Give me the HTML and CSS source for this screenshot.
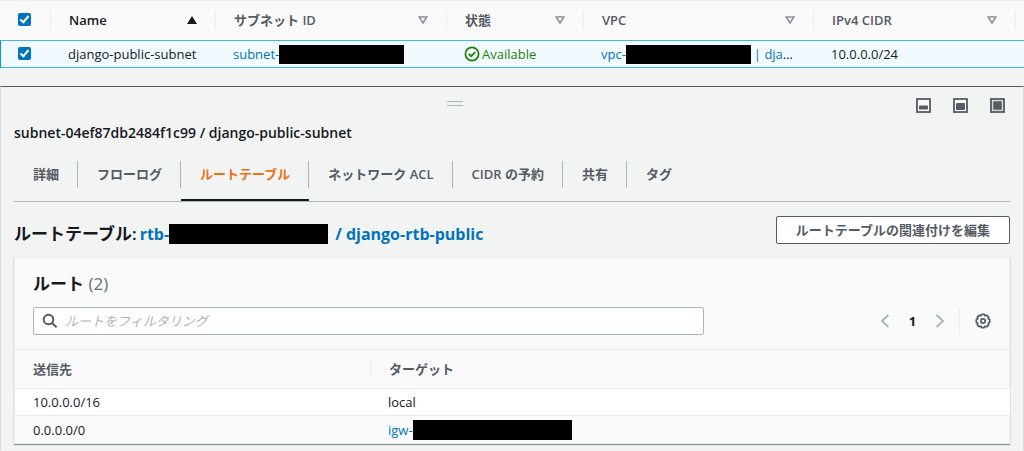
FILE: index.html
```html
<!DOCTYPE html>
<html lang="ja">
<head>
<meta charset="utf-8">
<title>サブネット</title>
<link rel="stylesheet" href="styles.css">
</head>
<body>
<table class="subnets">
  <colgroup><col class="c-check"><col class="c-name"><col class="c-id"><col class="c-state"><col class="c-vpc"><col class="c-cidr"></colgroup>
  <thead>
    <tr>
      <th class="check-cell"><input type="checkbox" class="check" aria-label="すべて選択" checked></th>
      <th><div class="head dark"><span>Name</span><svg class="sort" width="12" height="10" viewBox="0 0 12 10"><path d="M6 1 L11 9 H1 Z" fill="#16191f"/></svg></div></th>
      <th><div class="head"><span>サブネット ID</span><svg class="sort" width="12" height="10" viewBox="0 0 12 10"><path d="M2.3 2 H9.7 L6 8 Z" fill="none" stroke="#879596" stroke-width="1.6"/></svg></div></th>
      <th><div class="head"><span>状態</span><svg class="sort" width="12" height="10" viewBox="0 0 12 10"><path d="M2.3 2 H9.7 L6 8 Z" fill="none" stroke="#879596" stroke-width="1.6"/></svg></div></th>
      <th><div class="head"><span>VPC</span><svg class="sort" width="12" height="10" viewBox="0 0 12 10"><path d="M2.3 2 H9.7 L6 8 Z" fill="none" stroke="#879596" stroke-width="1.6"/></svg></div></th>
      <th><div class="head last"><span>IPv4 CIDR</span><svg class="sort" width="12" height="10" viewBox="0 0 12 10"><path d="M2.3 2 H9.7 L6 8 Z" fill="none" stroke="#879596" stroke-width="1.6"/></svg></div></th>
    </tr>
  </thead>
  <tbody>
    <tr class="selected">
      <td class="check-cell"><input type="checkbox" class="check" aria-label="django-public-subnet" checked></td>
      <td><div class="cell">django-public-subnet</div></td>
      <td><div class="cell"><a href="#">subnet-</a><span class="mask"></span></div></td>
      <td><div class="cell ok"><svg width="16" height="16" viewBox="0 0 16 16" fill="none" stroke="#1d8102" stroke-width="1.7"><circle cx="8" cy="8" r="6.6"/><path d="M4.7 7.8 L7.2 10.2 L11.3 6"/></svg><span>Available</span></div></td>
      <td><div class="cell"><a href="#">vpc-</a><span class="mask"></span><a href="#" class="after">| dja</a>…</div></td>
      <td><div class="cell">10.0.0.0/24</div></td>
    </tr>
  </tbody>
</table>

<section class="panel">
  <div class="panel-bar">
    <span class="grip"></span>
    <div class="sizes">
      <button type="button" aria-label="小"><svg width="15" height="15" viewBox="0 0 15 15"><rect x="1" y="1" width="13" height="13" fill="#fafafa" stroke="#545b64" stroke-width="1.8"/><rect x="3" y="7.6" width="9" height="4" rx="1" fill="#545b64"/></svg></button>
      <button type="button" aria-label="中"><svg width="15" height="15" viewBox="0 0 15 15"><rect x="1" y="1" width="13" height="13" fill="#fafafa" stroke="#545b64" stroke-width="1.8"/><rect x="3" y="5" width="9" height="7" rx="1" fill="#545b64"/></svg></button>
      <button type="button" aria-label="大"><svg width="15" height="15" viewBox="0 0 15 15"><rect x="1" y="1" width="13" height="13" fill="#d5dbdb" stroke="#545b64" stroke-width="1.8"/><rect x="3.2" y="3.2" width="8.6" height="8.6" rx="1" fill="#545b64"/></svg></button>
    </div>
  </div>
  <h1 class="title">subnet-04ef87db2484f1c99 / django-public-subnet</h1>
  <nav class="tabs">
    <a href="#" class="tab"><span>詳細</span></a>
    <a href="#" class="tab"><span>フローログ</span></a>
    <a href="#" class="tab active"><span>ルートテーブル</span></a>
    <a href="#" class="tab"><span>ネットワーク ACL</span></a>
    <a href="#" class="tab"><span>CIDR の予約</span></a>
    <a href="#" class="tab"><span>共有</span></a>
    <a href="#" class="tab"><span>タグ</span></a>
  </nav>
  <div class="route-head">
    <h2 class="route-title"><span class="label">ルートテーブル:</span><a href="#">rtb-</a><span class="mask wide"></span><a href="#" class="after">/ django-rtb-public</a></h2>
    <button type="button" class="edit">ルートテーブルの関連付けを編集</button>
  </div>
  <div class="card">
    <h3 class="card-title">ルート <span class="count">(2)</span></h3>
    <div class="tools">
      <label class="search">
        <svg width="16" height="16" viewBox="0 0 16 16" fill="none" stroke="#545b64" stroke-width="2"><circle cx="6.5" cy="6.5" r="4.8"/><path d="M10 10 L14.6 14.2"/></svg>
        <input type="text" placeholder="ルートをフィルタリング" aria-label="ルートをフィルタリング">
      </label>
      <div class="pager">
        <button type="button" aria-label="前へ"><svg width="10" height="14" viewBox="0 0 10 14" fill="none" stroke="#aab7b8" stroke-width="2"><path d="M8.5 1 L2 7 L8.5 13"/></svg></button>
        <span class="page">1</span>
        <button type="button" aria-label="次へ"><svg width="10" height="14" viewBox="0 0 10 14" fill="none" stroke="#aab7b8" stroke-width="2"><path d="M1.5 1 L8 7 L1.5 13"/></svg></button>
        <span class="bar"></span>
        <button type="button" aria-label="設定"><svg width="16" height="16" viewBox="0 0 16 16" fill="none" stroke="#545b64" stroke-width="1.7" stroke-linejoin="round"><path d="M6.6 1.3 H9.4 L10.2 2.8 L11.9 2.3 L13.7 4.1 L13.2 5.8 L14.7 6.6 V9.4 L13.2 10.2 L13.7 11.9 L11.9 13.7 L10.2 13.2 L9.4 14.7 H6.6 L5.8 13.2 L4.1 13.7 L2.3 11.9 L2.8 10.2 L1.3 9.4 V6.6 L2.8 5.8 L2.3 4.1 L4.1 2.3 L5.8 2.8 Z"/><circle cx="8" cy="8" r="2.2"/></svg></button>
      </div>
    </div>
    <table class="routes">
      <colgroup><col class="c-dest"><col class="c-target"></colgroup>
      <thead><tr><th><div class="rhead">送信先</div></th><th><div class="rhead split">ターゲット</div></th></tr></thead>
      <tbody>
        <tr><td><div class="rcell">10.0.0.0/16</div></td><td><div class="rcell">local</div></td></tr>
        <tr><td><div class="rcell">0.0.0.0/0</div></td><td><div class="rcell"><a href="#">igw-</a><span class="mask wide"></span></div></td></tr>
      </tbody>
    </table>
  </div>
</section>
</body>
</html>
```
FILE: styles.css
```css
*, *::after { box-sizing: border-box; }

body {
  margin: 0;
  background: #f2f3f3;
  color: #16191f;
  font: 13px/20px "Open Sans", "Noto Sans CJK JP", sans-serif;
}

a { color: #0073bb; text-decoration: none; }
svg { display: block; flex: none; }
button { font: inherit; cursor: pointer; }
table { width: 100%; border-collapse: separate; border-spacing: 0; table-layout: fixed; }
th, td { padding: 0; text-align: left; }
th { font-weight: 600; }

.mask { width: 125px; height: 19px; background: #000; flex: none; }
.mask.wide { width: 159px; height: 20px; }
.after { margin-left: 3px; }

.c-check { width: 50px; }
.c-name { width: 165px; }
.c-id { width: 231px; }
.c-state { width: 137px; }
.c-vpc { width: 230px; }
.c-cidr { width: 211px; }

.subnets th {
  height: 40px;
  padding-bottom: 2px;
  background: #fafafa;
  border-top: 1px solid #eaeded;
}
.head {
  display: flex;
  align-items: center;
  justify-content: space-between;
  height: 20px;
  padding: 0 17px 0 18px;
  border-left: 1px solid #eaeded;
  color: #545b64;
}
.head.dark { color: #16191f; }
.head.last { margin-right: 8px; border-right: 1px solid #eaeded; }

.selected td {
  height: 28px;
  background: #f1faff;
  border-top: 1px solid #44b9d6;
  border-bottom: 1px solid #44b9d6;
  white-space: nowrap;
}
.selected td:first-child { border-left: 1px solid #00a1c9; }
.cell { display: flex; align-items: center; padding-left: 18px; }
.ok { gap: 2px; color: #1d8102; }
.subnets .check-cell { padding: 0 0 3px 18px; }
.subnets .selected .check-cell { padding: 0 0 2px 17px; }
.check {
  appearance: none;
  display: flex;
  justify-content: center;
  width: 13px;
  height: 13px;
  margin: 0;
  border-radius: 2px;
  background: #0073bb;
}
.check::after {
  content: "";
  width: 5px;
  height: 9px;
  margin-top: 1px;
  border: solid #fff;
  border-width: 0 2px 2px 0;
  transform: rotate(40deg);
}

.panel {
  margin-top: 18px;
  padding: 0 13px 6px;
  border: solid #d5dbdb;
  border-width: 0 1px;
  border-top: 1px solid #545b64;
}
.panel-bar {
  display: grid;
  grid-template-columns: 1fr auto 1fr;
  height: 36px;
  padding: 11px 5px 0 0;
}
.grip {
  grid-column: 2;
  width: 16px;
  height: 5px;
  margin: 3px 110px 0 0;
  border: solid #aab7b8;
  border-width: 1px 0;
}
.sizes { display: flex; gap: 22px; justify-content: flex-end; }
.sizes button, .pager button { padding: 0; border: 0; background: none; }
.sizes button { height: 15px; }

.title { margin: 0; font-size: 14px; font-weight: 600; }

.tabs { display: flex; margin-top: 18px; border-bottom: 1px solid #aab7b8; }
.tab { height: 40px; border-bottom: 2px solid transparent; color: #545b64; font-weight: 600; }
.tab span { display: block; height: 27px; padding: 0 18px 0 19px; border-right: 1px solid #aab7b8; line-height: 27px; }
.tab:last-child span { border-right: 0; }
.tab.active { color: #ec7211; border-bottom-color: #16191f; }

.route-head { display: flex; justify-content: space-between; margin-top: 14px; }
.route-title { display: flex; align-items: center; margin: 0; padding-top: 6px; font-size: 17px; line-height: 24px; font-weight: 600; }
.route-title a { font-size: 16px; font-weight: 700; }
.route-title .after { margin-left: 7px; }
.label { margin-right: 3px; }
.edit {
  height: 28px;
  padding: 0 19px;
  border: 1px solid #545b64;
  border-radius: 2px;
  background: #fff;
  color: #545b64;
  font-weight: 600;
}

.card {
  margin-top: 11px;
  border: 1px solid #eaeded;
  background: #fafafa;
  box-shadow: 0 1px 1px #879596;
}
.card-title { margin: 0; padding: 14px 18px 0; font-size: 17px; line-height: 24px; font-weight: 600; }
.count { color: #687078; font-weight: 400; }
.tools { display: flex; justify-content: space-between; padding: 11px 18px 14px; }
.search {
  display: flex;
  align-items: center;
  gap: 7px;
  width: 70%;
  height: 28px;
  padding: 0 8px;
  border: 1px solid #aab7b8;
  border-radius: 2px;
  background: #fff;
}
.search input { flex: 1; padding: 0; border: 0; outline: 0; background: none; font: inherit; }
.search input::placeholder { color: #aab7b8; font-style: italic; opacity: 1; }
.pager { display: flex; align-items: center; }
.page { width: 45px; text-align: center; font-weight: 700; }
.bar { width: 1px; height: 28px; margin: 0 15px 0 14px; background: #eaeded; }

.c-dest { width: 355px; }
.c-target { width: 640px; }
.routes th { height: 40px; border: solid #eaeded; border-width: 1px 0; color: #545b64; }
.rhead { padding-left: 18px; }
.rhead.split { border-left: 1px solid #eaeded; }
.routes td { height: 27px; }
.routes tr:first-child td { background: #fff; border-bottom: 1px solid #eaeded; }
.rcell { display: flex; align-items: center; padding-left: 18px; }
```
